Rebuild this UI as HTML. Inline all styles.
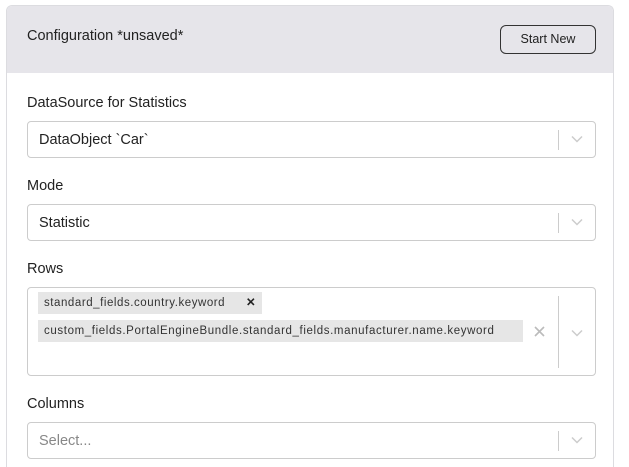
<!DOCTYPE html>
<html style="width:629px;height:467px;overflow:hidden"><head><style>
*{box-sizing:border-box;margin:0;padding:0}
body{width:629px;height:467px;background:#fff;font-family:"Liberation Sans",sans-serif;color:#222;position:relative;overflow:hidden}
.card{position:absolute;left:6px;top:5px;width:608px;height:462px;border:1px solid #dcdce0;border-bottom:none;border-radius:6px 6px 0 0;overflow:hidden;background:#fff}
.hdr{height:67px;background:#e6e5ea;position:relative}
.title{position:absolute;left:20px;top:22px;font-size:14.5px;color:#222}
.btn{position:absolute;left:493px;top:19px;width:96px;height:29px;border:1px solid #333;border-radius:6px;font-size:12.5px;text-align:center;line-height:27px;color:#222}
.lbl{position:absolute;left:27px;font-size:14.5px;color:#222}
.sel{position:absolute;left:27px;width:569px;height:37px;border:1px solid #ccc;border-radius:4px;background:#fff}
.sel .v{position:absolute;left:11px;top:10px;font-size:14.5px;color:#222}
.sep{position:absolute;right:36px;top:8px;width:1px;height:20px;background:#ccc}
.chev{position:absolute;right:12px;top:13px;width:12px;height:8px}
.tag{position:absolute;left:10px;height:22px;background:#e6e6e6;font-size:11.5px;line-height:22px;padding-left:6px;color:#333;letter-spacing:0.55px}
</style></head><body>
<div class="card"><div class="hdr"><div class="title">Configuration *unsaved*</div><div class="btn">Start New</div></div></div>
<div class="lbl" style="top:95px">DataSource for Statistics</div>
<div class="sel" style="top:121px"><div class="v">DataObject `Car`</div><div class="sep"></div><svg class="chev" viewBox="0 0 12 8"><path d="M1 1.5L6 6.5L11 1.5" fill="none" stroke="#ccc" stroke-width="1.5"/></svg></div>
<div class="lbl" style="top:178px">Mode</div>
<div class="sel" style="top:204px"><div class="v">Statistic</div><div class="sep"></div><svg class="chev" viewBox="0 0 12 8"><path d="M1 1.5L6 6.5L11 1.5" fill="none" stroke="#ccc" stroke-width="1.5"/></svg></div>
<div class="lbl" style="top:261px">Rows</div>
<div class="sel" style="top:287px;height:89px">
<div class="tag" style="top:4px;width:224px">standard_fields.country.keyword<span style="position:absolute;left:208px;font-weight:bold;color:#222;letter-spacing:0">✕</span></div>
<div class="tag" style="top:32px;width:485px;letter-spacing:0.62px;white-space:nowrap;overflow:hidden">custom_fields.PortalEngineBundle.standard_fields.manufacturer.name.keyword</div>
<svg style="position:absolute;left:506px;top:38px" width="11" height="11" viewBox="0 0 11 11"><path d="M1 1L10 10M10 1L1 10" stroke="#bbb" stroke-width="1.6"/></svg>
<div style="position:absolute;left:530px;top:8px;width:1px;height:72px;background:#ccc"></div>
<svg class="chev" style="top:41px" viewBox="0 0 12 8"><path d="M1 1.5L6 6.5L11 1.5" fill="none" stroke="#ccc" stroke-width="1.5"/></svg></div>
<div class="lbl" style="top:396px">Columns</div>
<div class="sel" style="top:422px"><div class="v" style="color:#888">Select...</div><div class="sep"></div><svg class="chev" viewBox="0 0 12 8"><path d="M1 1.5L6 6.5L11 1.5" fill="none" stroke="#ccc" stroke-width="1.5"/></svg></div>
</body></html>
